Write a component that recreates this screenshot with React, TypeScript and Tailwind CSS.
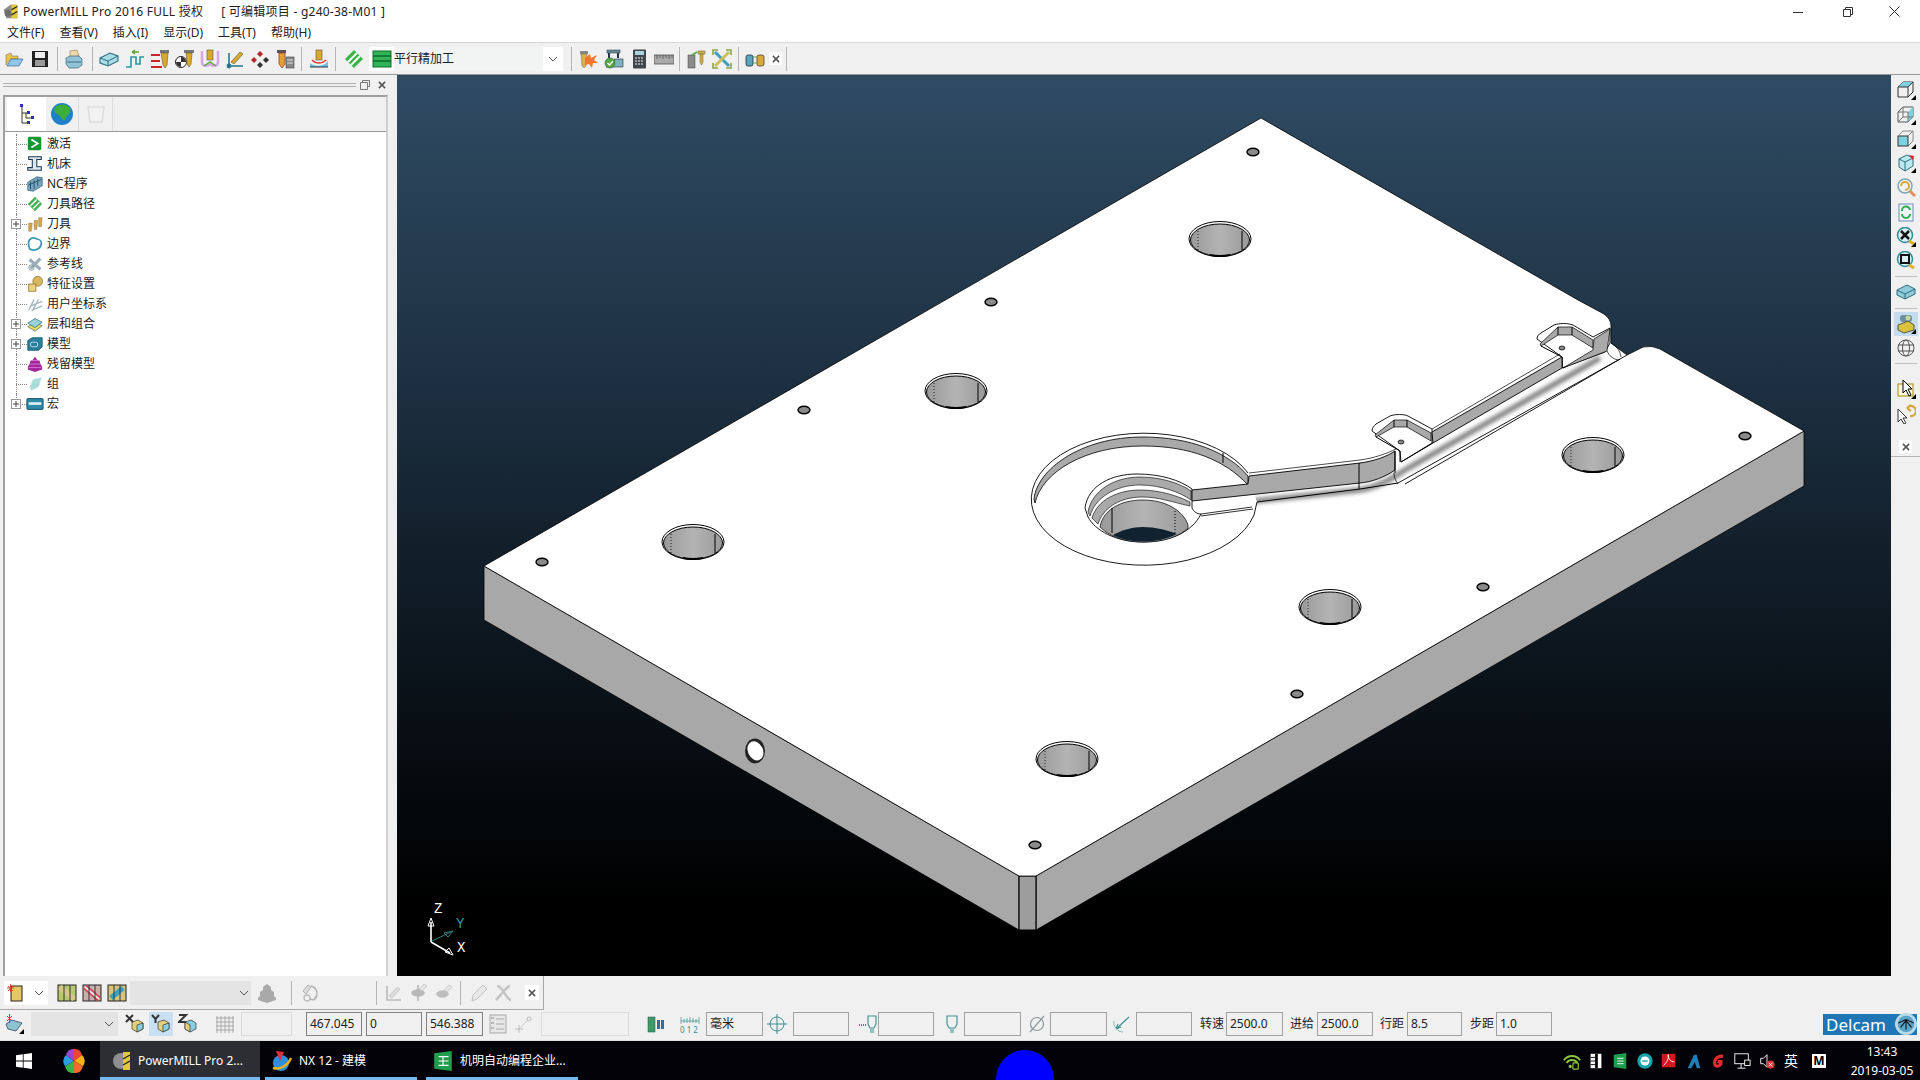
import type { ReactNode } from "react"

type IcProps = { children: ReactNode; className?: string; size?: number }

function Ic({ children, className = "", size = 20 }: IcProps) {
  return (
    <svg viewBox="0 0 20 20" width={size} height={size} className={`shrink-0 ${className}`}>
      {children}
    </svg>
  )
}

const corner = <path d="M20 20V15L15 20Z" fill="#000" />

// main toolbar
const icons: Record<string, ReactNode> = {
  open: <><path d="M2 16L2 6L7 4L8 7L14 7L14 10L6 10Z" fill="#e9c24a" stroke="#876" strokeWidth=".6" /><path d="M3 17L7 10L19 10L15 17Z" fill="#8fc6ea" stroke="#357" strokeWidth=".6" /></>,
  save: <><rect x="2" y="2" width="16" height="16" fill="#222" /><rect x="5" y="3" width="10" height="6" fill="#eee" /><rect x="5" y="11" width="10" height="6" fill="#999" /></>,
  print: <><path d="M6 2L13 1L15 7L6 8Z" fill="#eed9a8" stroke="#875" strokeWidth=".6" /><path d="M2 9L6 7L15 7L18 10L18 16L14 19L5 19L2 15Z" fill="#8fc3d5" stroke="#467" strokeWidth=".7" /><path d="M3 13L17 13" stroke="#356" strokeWidth=".8" /></>,
  block: <><path d="M1 9L11 4L19 7L19 12L9 17L1 14Z" fill="#a9dbe6" stroke="#2d6d80" strokeWidth="1.1" /><path d="M1 9L9 12L19 7M9 12L9 17" stroke="#2d6d80" fill="none" strokeWidth="1" /></>,
  path: <><path d="M1 18L6 18L6 8L11 8L11 15L15 15L15 8L19 8" fill="none" stroke="#2b97a3" strokeWidth="1.6" /><path d="M14 3L7 3M7 3L10 1M7 3L10 5" stroke="#5aa833" strokeWidth="1.3" fill="none" /></>,
  tool: <><path d="M1 6L10 6M1 12L10 12M1 18L12 18" stroke="#c6262a" strokeWidth="2" /><rect x="10" y="1" width="9" height="3" fill="#777" /><path d="M11 4L18 4L17 16L15 19L13 16Z" fill="#d9a92c" stroke="#654" strokeWidth=".6" /></>,
  toolball: <><circle cx="6" cy="13" r="5.5" fill="#fff" stroke="#222" /><path d="M6 8A5 5 0 0 1 11 13L6 13L1 13A5 5 0 0 0 6 18Z" fill="#333" /><rect x="9" y="1" width="10" height="3" fill="#777" /><path d="M11 4L17 4L16 15L14 18L12 15Z" fill="#d9a92c" stroke="#654" strokeWidth=".6" /></>,
  pocket: <><path d="M2 2L2 13C2 18 8 17 10 15C12 17 18 18 18 13L18 2" stroke="#d8a6e4" strokeWidth="2.5" fill="none" /><path d="M4 17L10 13L16 17" stroke="#5cae3a" strokeWidth="1.5" fill="none" /><rect x="7" y="1" width="6" height="10" fill="#d9a92c" stroke="#654" strokeWidth=".6" /></>,
  axes: <><path d="M4 4L4 17L18 17" stroke="#26778d" strokeWidth="1.6" fill="none" /><circle cx="4" cy="17" r="2.4" fill="#26778d" /><path d="M6 13L15 3L18 5L9 15Z" fill="#d9a92c" stroke="#554" strokeWidth=".6" /></>,
  points: <><path d="M10 2L13 5L10 8L7 5Z" fill="#b12a28" /><path d="M4 8L7 11L4 14L1 11Z" fill="#b12a28" /><path d="M16 8L19 11L16 14L13 11Z" fill="#333" /><path d="M10 13L13 16L10 19L7 16Z" fill="#333" /></>,
  holder: <><rect x="2" y="1" width="9" height="3" fill="#555" /><path d="M4 4L10 4L10 15L7 19L4 15Z" fill="#e2a132" stroke="#a33" strokeWidth=".8" /><rect x="11" y="8" width="8" height="11" fill="#888" stroke="#444" strokeWidth=".6" /><path d="M12 11L18 11M12 14L18 14" stroke="#ddd" /></>,
  mill: <><path d="M1 18L1 14C6 18 14 18 19 12L19 18Z" fill="#72c2df" /><path d="M3 11C7 15 13 15 17 11" stroke="#d93a30" strokeWidth="1.4" fill="none" /><rect x="7" y="1" width="6" height="10" fill="#d9a92c" stroke="#654" strokeWidth=".6" /><path d="M1 18L19 18" stroke="#234" strokeWidth="1" /></>,
  stripes: <><path d="M10 1L19 10L10 19L1 10Z" fill="#3bb448" /><path d="M4 13L13 4M7 16L16 7" stroke="#fff" strokeWidth="1.8" /></>,
  list: <><rect x="1" y="2" width="18" height="16" fill="#31b457" stroke="#0e6a2b" /><path d="M1 7L19 7M1 12L19 12" stroke="#0e6a2b" strokeWidth="1.4" /></>,
  burst: <><rect x="1" y="2" width="8" height="3" fill="#888" /><path d="M2 5L8 5L7 17L5 19L3 17Z" fill="#d8b04c" stroke="#765" strokeWidth=".5" /><path d="M6 9L11 5L12 9L18 6L15 11L19 14L14 14L13 19L10 15L6 16Z" fill="#f2762b" /></>,
  check: <><rect x="3" y="1" width="13" height="3" fill="#678b96" stroke="#234" strokeWidth=".5" /><path d="M5 4L5 9M14 4L14 9" stroke="#234" strokeWidth="2" /><path d="M10 10L19 10L19 18L2 18L10 14Z" fill="#7fb3bf" stroke="#234" strokeWidth=".6" /><circle cx="6" cy="14" r="5" fill="#55a83a" stroke="#265" strokeWidth=".6" /><path d="M3.5 14L5.5 16L9 12" stroke="#fff" fill="none" strokeWidth="1.3" /></>,
  calc: <><rect x="4" y="0.5" width="13" height="19" rx="1" fill="#3f454a" /><rect x="6" y="2" width="9" height="4" fill="#a8d2dd" /><path d="M6 9H15M6 12H15M6 15H15" stroke="#bbb" strokeWidth="1.6" strokeDasharray="2 1" /></>,
  ruler: <><rect x="0" y="6" width="20" height="9" fill="#aaa" stroke="#555" strokeWidth=".8" /><path d="M3 6V10M6 6V9M9 6V10M12 6V9M15 6V10M18 6V9" stroke="#444" strokeWidth=".7" /></>,
  tools2: <><rect x="2" y="6" width="7" height="13" fill="#8a8a8a" stroke="#444" strokeWidth=".5" /><rect x="12" y="2" width="7" height="3" fill="#d6b13e" stroke="#654" strokeWidth=".5" /><path d="M14 5H17V13L15.5 16L14 13Z" fill="#d6b13e" stroke="#654" strokeWidth=".5" /><path d="M6 6L11 3" stroke="#4eaa3a" strokeWidth="1.5" /></>,
  cross: <><path d="M3 3L17 17" stroke="#3c9fc0" strokeWidth="3" /><path d="M17 3L3 17" stroke="#c9c05a" strokeWidth="3" /><path d="M1 6V1H6M14 1H19V6M1 14V19H6M19 14V19H14" stroke="#8aa348" strokeWidth="1.6" fill="none" /></>,
  blocks: <><rect x="1" y="6" width="7" height="11" rx="2" fill="#5aa5b9" stroke="#234" strokeWidth=".8" /><rect x="12" y="6" width="7" height="11" rx="2" fill="#d8a83c" stroke="#543" strokeWidth=".8" /><path d="M8 8H12M8 14H12" stroke="#5bb048" strokeWidth="1.2" /></>,
  // tree
  act: <><rect x="2" y="2" width="15" height="15" rx="2" fill="#149634" /><path d="M6 5L13 9.5L6 14" fill="none" stroke="#fff" strokeWidth="2" /></>,
  machine: <><path d="M3 2H17V5H12V13H17V17H2V14H7V5H3Z" fill="#dfe8ee" stroke="#1b3b55" strokeWidth="1.2" /></>,
  nc: <><path d="M2 8L12 2L18 3L18 12L8 18L2 17Z" fill="#7aa4bd" stroke="#2f5d7a" strokeWidth=".8" /><path d="M5 8V16M9 6V15M13 4V12M3 11L17 5" stroke="#234f6a" strokeWidth="1" /></>,
  toolpath: <><path d="M10 2L18 10L10 18L2 10Z" fill="#49b057" /><path d="M5 12L12 5M8 15L15 8" stroke="#fff" strokeWidth="1.5" /></>,
  tools: <><path d="M3 9H7L6 18H3Z" fill="#d8a83c" stroke="#876" strokeWidth=".5" /><path d="M9 6H13L12 16H9Z" fill="#d8a83c" stroke="#876" strokeWidth=".5" /><path d="M14 3H18L17 13H14Z" fill="#d8a83c" stroke="#876" strokeWidth=".5" /></>,
  boundary: <path d="M3 10C2 4 8 2 11 4C14 5 18 5 17 10C16 16 9 18 5 16C3 15 3 12 3 10Z" fill="#fff" stroke="#3e9bb5" strokeWidth="2" />,
  pattern: <><path d="M4 5L16 16M16 4L5 15" stroke="#9aaeb8" strokeWidth="3.5" /><circle cx="6" cy="14" r="3" fill="none" stroke="#7b919b" /></>,
  feature: <><circle cx="13" cy="7" r="5.5" fill="#d8b75c" stroke="#86682a" strokeWidth=".7" /><rect x="3" y="10" width="8" height="8" fill="#ecd27c" stroke="#86682a" strokeWidth=".8" /></>,
  ucs: <><path d="M3 17L9 5M7 18L14 5M4 13L18 7M6 17L18 12" stroke="#a8b8c2" strokeWidth="1.6" /></>,
  layer: <><path d="M2 13L10 8L18 12L10 18Z" fill="#e6da5c" stroke="#4a6d7e" strokeWidth=".8" /><path d="M2 9L10 4L18 8L10 14Z" fill="#9ad0d8" stroke="#2e6d80" strokeWidth=".8" /></>,
  model: <><path d="M2 6L7 3H18V13L14 17H2Z" fill="#2a7f9b" stroke="#0c4558" strokeWidth=".8" /><rect x="5" y="8" width="8" height="5" rx="2" fill="none" stroke="#cde" strokeWidth="1" /></>,
  stock: <><path d="M10 2L13 6L15 6L16 10L18 13L18 16L10 19L2 16L2 13L4 10L5 6L7 6Z" fill="#a0269a" /><path d="M4 10H16M3 14H17M6 6H14" stroke="#e07ad8" strokeWidth="1" /></>,
  group: <path d="M4 14L8 5L17 3L14 13L6 17Z" fill="#a9dbd8" stroke="#c8e6e6" strokeWidth="1" />,
  macro: <><rect x="1" y="4" width="18" height="12" rx="1" fill="#2c8aa8" stroke="#0d4a5e" /><rect x="3" y="8" width="14" height="3" fill="#d8eef2" /></>,
  // right strip
  cubeTop: <><path d="M2 7L7 2H17V12L12 17H2Z" fill="none" stroke="#333" /><path d="M2 7L7 2H17L12 7Z" fill="#7fd0e0" /><path d="M2 7H12V17M12 7L17 2" fill="none" stroke="#333" />{corner}</>,
  cubeRight: <><path d="M2 7L7 2H17V12L12 17H2Z" fill="none" stroke="#555" /><path d="M12 7L17 2V12L12 17Z" fill="#7fd0e0" /><path d="M2 7H12V17M7 2V12H17M7 12L2 17" fill="none" stroke="#777" />{corner}</>,
  cubeFront: <><path d="M7 2H17V12L12 17" fill="none" stroke="#888" /><rect x="2" y="7" width="10" height="10" fill="#7fd0e0" stroke="#333" /><path d="M2 7L7 2M12 7L17 2" stroke="#888" />{corner}</>,
  cubeIso: <><path d="M3 6L11 2L17 5V13L9 18L3 14Z" fill="#bde8ef" stroke="#2d6d80" /><path d="M3 6L9 9L17 5M9 9V18" stroke="#2d6d80" fill="none" /><path d="M13 2L18 3L17 7Z" fill="#e02020" />{corner}</>,
  zoomUndo: <><circle cx="9" cy="8" r="7" fill="#f3f3f3" stroke="#7aa7b0" strokeWidth="1.5" /><path d="M5 8A4 4 0 1 1 9 12" stroke="#d8a83c" strokeWidth="2" fill="none" /><path d="M14 13L19 18" stroke="#e0905a" strokeWidth="3" /></>,
  refresh: <><rect x="3" y="2" width="14" height="17" fill="#eef4fa" stroke="#6a8db8" /><path d="M6 9A4 4 0 0 1 14 8M14 12A4 4 0 0 1 6 12" stroke="#2bae4a" strokeWidth="2" fill="none" /></>,
  zoomFit: <><circle cx="9" cy="8" r="7.5" fill="#dbeef1" stroke="#2f8b9a" strokeWidth="1.5" /><path d="M5 4L13 12M13 4L5 12" stroke="#111" strokeWidth="2.5" /><path d="M13 14L18 17" stroke="#e0b030" strokeWidth="3" />{corner}</>,
  zoomBox: <><circle cx="9" cy="8" r="7.5" fill="#dbeef1" stroke="#2f8b9a" strokeWidth="1.5" /><rect x="5" y="4" width="8" height="8" fill="none" stroke="#111" strokeWidth="2" /><path d="M13 14L18 17" stroke="#e0b030" strokeWidth="3" /></>,
  shade: <><path d="M1 8L11 3L19 7V12L9 17L1 13Z" fill="#8fcbd8" stroke="#2d6d80" /><path d="M1 8L9 12L19 7M9 12V17" fill="none" stroke="#2d6d80" /></>,
  shadeOn: <><rect x="4" y="1" width="12" height="7" rx="3" fill="#6f8f9c" /><path d="M2 11L12 7L18 11V16L8 19L2 16Z" fill="#d9c23c" stroke="#554" /><circle cx="12" cy="4" r="2.5" fill="#c4d8a0" />{corner}</>,
  wire: <><circle cx="10" cy="10" r="8" fill="none" stroke="#555" /><ellipse cx="10" cy="10" rx="3.5" ry="8" fill="none" stroke="#555" /><path d="M2 7H18M2 13H18" stroke="#555" /></>,
  selBox: <><rect x="2" y="5" width="15" height="12" fill="#fdf8de" stroke="#b9a235" strokeWidth="1.3" /><path d="M7 1V14L10 11L13 17L15 16L12 10L16 10Z" fill="#fff" stroke="#000" />{corner}</>,
  selUndo: <><path d="M2 5V18L5 15L8 20L10 19L7 14L11 14Z" fill="#fff" stroke="#333" /><path d="M11 4A5 5 0 1 1 14 12M11 4L15 1M11 4L15 7" stroke="#d8a83c" strokeWidth="2.2" fill="none" /></>,
  // bottom
  layerBar: <><rect x="4" y="3" width="11" height="15" fill="#e5c763" stroke="#222" /><path d="M1 3L6 8M6 3L1 8M3.5 1V9M0 5H7" stroke="#d33" strokeWidth=".9" /></>,
  toolA: <><rect x="1" y="2" width="18" height="16" fill="#b9c96a" stroke="#222" /><path d="M3 4L17 16" stroke="#d8c888" strokeWidth="5" /><path d="M7 2V18M13 2V18" stroke="#334" /></>,
  toolB: <><rect x="1" y="2" width="18" height="16" fill="#c9b0a6" stroke="#222" /><path d="M3 4L17 16" stroke="#d8384a" strokeWidth="5" /><path d="M3 4L17 16" stroke="#eee" strokeWidth="2" /><path d="M7 2V18M13 2V18" stroke="#334" /></>,
  toolC: <><rect x="1" y="2" width="18" height="16" fill="#d5c47a" stroke="#222" /><path d="M4 15L16 5" stroke="#3aa0c0" strokeWidth="5" /><path d="M7 2V18M13 2V18" stroke="#334" /></>,
  stackOff: <path d="M10 1L14 4V7L17 9V13L19 15V17L10 20L1 17V15L3 13V9L6 7V4Z" fill="#a9a9a9" />,
  rotOff: <><path d="M3 8L8 2L11 4L6 11Z" fill="#ddd" stroke="#b0b0b0" /><path d="M11 3A8 8 0 0 1 14 17M14 17L10 16M14 17L16 13" fill="none" stroke="#b0b0b0" strokeWidth="1.3" /><circle cx="7" cy="15" r="3" fill="none" stroke="#bbb" strokeWidth="1.3" /></>,
  axOff: <><path d="M4 3V17H18" stroke="#bbb" strokeWidth="1.6" fill="none" /><path d="M6 13L14 4L17 6L9 15Z" fill="#ddd" stroke="#bbb" strokeWidth=".7" /></>,
  bellOff: <><path d="M10 2V18" stroke="#aaa" strokeWidth="1.3" /><path d="M3 10C5 5 15 5 17 10C15 15 5 15 3 10Z" fill="#b8b8b8" /><path d="M11 6L16 1L19 3L14 8Z" fill="#e5e5e5" stroke="#bbb" strokeWidth=".6" /></>,
  bell2Off: <><path d="M3 11C5 6 14 6 16 11C14 16 5 16 3 11Z" fill="#bdbdbd" /><path d="M11 7L16 2L19 4L14 9Z" fill="#e5e5e5" stroke="#bbb" strokeWidth=".6" /></>,
  penOff: <><path d="M3 18L4 12L14 2L18 6L8 16Z" fill="#e8e8e8" stroke="#c4c4c4" /></>,
  xOff: <><path d="M4 3C8 3 10 8 12 11C14 14 16 17 18 17M17 3C13 4 8 12 3 17" stroke="#c4c4c4" strokeWidth="2.6" fill="none" /></>,
  plane: <><path d="M2 10L8 6L18 9L12 17L4 15Z" fill="#8bc3d0" stroke="#346" strokeWidth=".8" /><path d="M3 2L8 7M8 2L3 7M5.5 0V9" stroke="#d33" strokeWidth="1" />{corner}</>,
  axX: <><path d="M7 8L13 6L18 9V15L12 18L7 15Z" fill="#e6cf7a" stroke="#333" strokeWidth=".7" /><path d="M12 11L18 9V15L12 18Z" fill="#86cfe0" stroke="#333" strokeWidth=".7" /><path d="M1 1L8 8M8 1L1 8" stroke="#333" strokeWidth="2" /></>,
  axY: <><path d="M7 8L13 6L18 9V15L12 18L7 15Z" fill="#e6cf7a" stroke="#333" strokeWidth=".7" /><path d="M12 11L18 9V15L12 18Z" fill="#86cfe0" stroke="#333" strokeWidth=".7" /><path d="M1 1L4.5 5L8 1M4.5 5V9" stroke="#333" strokeWidth="2" fill="none" /></>,
  axZ: <><path d="M7 8L13 6L18 9V15L12 18L7 15Z" fill="#86cfe0" stroke="#333" strokeWidth=".7" /><path d="M7 8L12 11V18L7 15Z" fill="#e6cf7a" stroke="#333" strokeWidth=".7" /><path d="M1 1H8L1 8H8" stroke="#333" strokeWidth="2" fill="none" /></>,
  grid: <path d="M2 2V19M6 2V19M10 2V19M14 2V19M18 2V19M1 4H19M1 8H19M1 12H19M1 16H19" stroke="#9a9a9a" strokeWidth=".8" />,
  xyz: <><rect x="2" y="1" width="16" height="18" fill="#e6e6e6" stroke="#aaa" /><path d="M8 5H16M8 10H16M8 15H16" stroke="#aaa" /><path d="M3 4H6M3 9H6M3 14H6" stroke="#888" /></>,
  move: <><path d="M5 15L14 6" stroke="#bbb" strokeDasharray="2 1" /><circle cx="15" cy="5" r="2" fill="none" stroke="#bbb" /><path d="M5 11V19M1 15H9" stroke="#bbb" /></>,
  status: <><rect x="2" y="3" width="7" height="15" fill="#3f9a68" stroke="#255" strokeWidth=".5" /><rect x="11" y="6" width="3" height="9" fill="#2d6fa8" /><rect x="15" y="6" width="3" height="9" fill="#2d6fa8" /></>,
  scale: <><path d="M1 3V10M19 3V10M1 7H19M4 5V9M7 4V9M10 3V9M13 4V9M16 5V9" stroke="#3b8f8f" strokeWidth=".7" /><text x="0" y="19" fontSize="8" fill="#3b8f8f">0 1 2</text></>,
  crosshair: <><circle cx="10" cy="10" r="7" fill="none" stroke="#3b8f8f" /><path d="M10 0V20M0 10H20" stroke="#3b8f8f" /></>,
  toolLen: <><path d="M10 2H18V10L16 14H12L10 10Z" fill="none" stroke="#3b8f8f" strokeWidth="1.1" /><path d="M12 16H16M12 18H16" stroke="#3b8f8f" /><path d="M1 11H9" stroke="#3b8f8f" strokeDasharray="1 1" strokeWidth="2" /></>,
  toolTip: <><path d="M5 2H15V10L13 14H7L5 10Z" fill="none" stroke="#3b8f8f" strokeWidth="1.1" /><path d="M8 16H12M8 18H12" stroke="#3b8f8f" /></>,
  dia: <><circle cx="10" cy="10" r="6.5" fill="none" stroke="#8a9a9a" strokeWidth="1.2" /><path d="M3 18L17 2" stroke="#8a9a9a" strokeWidth="1.2" /></>,
  angle: <><path d="M18 3L5 15M5 15L10 13M5 15L7 10" stroke="#3b8f8f" fill="none" strokeWidth="1.1" /><path d="M3 7C2 12 6 18 12 18" stroke="#8abcbc" fill="none" /></>,
  wifi: <><path d="M1 9C6 3 14 3 19 9M4 12C7 8 13 8 16 12" stroke="#8bc53f" strokeWidth="2.2" fill="none" /><rect x="11" y="12" width="6" height="7" rx="1" fill="none" stroke="#8bc53f" strokeWidth="1.4" /><circle cx="8" cy="16" r="1.8" fill="#8bc53f" /></>,
  film: <><rect x="4" y="2" width="12" height="16" fill="#fff" /><path d="M4 6H9M4 10H9M4 14H9" stroke="#000" /><rect x="9" y="2" width="3" height="16" fill="#000" /></>,
  sheet: <><path d="M3 3L17 1V19L3 17Z" fill="#1e9d4c" /><path d="M7 7H14M7 10H14M7 13H14" stroke="#fff" /></>,
  eset: <><circle cx="10" cy="10" r="8.5" fill="#1aa5ad" /><circle cx="10" cy="10" r="5" fill="#fff" /><path d="M7 10H13" stroke="#1aa5ad" strokeWidth="1.6" /></>,
  pdf: <><rect x="2" y="2" width="15" height="15" fill="#d4171d" /><path d="M4 15C8 11 10 7 9 3C9 8 12 11 16 11" stroke="#fff" fill="none" /></>,
  adsk: <path d="M3 18L10 3H13L17 18H13L11 11L7 18Z" fill="#1f7fb8" />,
  red: <path d="M16 3C8 2 3 8 5 15C7 19 13 18 15 14L15 9L10 9L9 12L11 13C10 15 8 14 8 12C8 8 12 6 15 7Z" fill="#e22c2c" />,
  net: <><rect x="2" y="2" width="15" height="11" fill="none" stroke="#fff" /><path d="M9 13V18M5 18H14" stroke="#fff" /><rect x="13" y="9" width="6" height="6" fill="#000" stroke="#fff" /></>,
  sound: <><path d="M3 7H6L10 3V17L6 13H3Z" fill="none" stroke="#fff" /><circle cx="14" cy="14" r="4.5" fill="#d43a3a" /><path d="M12 12L16 16M16 12L12 16" stroke="#fff" /></>,
}

const Tool = ({ name, w = 25 }: { name: string; w?: number }) => (
  <div className="flex justify-center shrink-0" style={{ width: w }}>
    <Ic>{icons[name]}</Ic>
  </div>
)

const Sep = () => <div className="w-px h-[24px] bg-[#b5b5b5] mx-[3px] shrink-0" />

function Close({ className = "" }: { className?: string }) {
  return (
    <div className={`w-[13px] h-[13px] bg-white flex items-center justify-center shrink-0 ${className}`}>
      <svg viewBox="0 0 9 9" width="8" height="8"><path d="M1 1L8 8M8 1L1 8" stroke="#555" strokeWidth="1.7" /></svg>
    </div>
  )
}

const Chevron = ({ color = "#555" }: { color?: string }) => (
  <svg viewBox="0 0 10 6" width="10" height="6"><path d="M1 1L5 5L9 1" fill="none" stroke={color} strokeWidth="1" /></svg>
)

function TitleBar() {
  return (
    <div className="h-[22px] pt-[1px] flex items-center bg-white text-[12px] text-[#222] shrink-0 tracking-[0.25px]">
      <Ic size={17} className="ml-[2px] mr-[4px]">
        <path d="M2 8L10 2L18 2L18 18L5 18Z" fill="#8e8e8e" /><path d="M11 2H18V18H11Z" fill="#dfc83a" /><path d="M11 8L18 4M11 14L18 10" stroke="#222" strokeWidth="1.4" /><circle cx="7" cy="12" r="4" fill="#6d6d6d" />
      </Ic>
      <span className="whitespace-pre">PowerMILL Pro 2016 FULL 授权</span>
      <span className="ml-[18px] whitespace-pre">[ 可编辑项目 - g240-38-M01 ]</span>
      <div className="ml-auto flex items-center">
        <svg width="10" height="10" className="mr-[40px]"><path d="M0 5.5H10" stroke="#333" /></svg>
        <svg width="10" height="10" className="mr-[36px]"><path d="M2.5 2.5V.5H9.5V7.5H7.5M.5 2.5H7.5V9.5H.5Z" fill="none" stroke="#333" /></svg>
        <svg width="11" height="11" className="mr-[20px]"><path d="M.5 .5L10.5 10.5M10.5 .5L.5 10.5" stroke="#333" /></svg>
      </div>
    </div>
  )
}

const menus = ["文件(F)", "查看(V)", "插入(I)", "显示(D)", "工具(T)", "帮助(H)"]

function MenuBar() {
  return (
    <div className="h-[21px] pt-[1px] flex items-center bg-white text-[12px] text-[#222] pl-[7px] gap-[15px] shrink-0 border-b border-[#d6d6d6]">
      {menus.map(m => (
        <span key={m} className="whitespace-nowrap">{m}</span>
      ))}
    </div>
  )
}

function MainToolbar() {
  return (
    <div className="h-[32px] flex items-center bg-[#f0f0f0] shrink-0 border-b border-[#9a9a9a] pl-[2px]">
      <Tool name="open" w={23} />
      <Tool name="save" w={29} />
      <Sep />
      <Tool name="print" w={26} />
      <div className="w-[2px]" />
      <Sep />
      <Tool name="block" w={26} />
      <Tool name="path" />
      <Tool name="tool" />
      <Tool name="toolball" />
      <Tool name="pocket" />
      <Tool name="axes" />
      <Tool name="points" />
      <Tool name="holder" />
      <div className="w-[1px]" />
      <Sep />
      <Tool name="mill" w={27} />
      <Sep />
      <Tool name="stripes" w={30} />
      <div className="w-[194px] h-[24px] bg-white flex items-center shrink-0">
        <Ic size={20} className="ml-[3px] mr-[2px]">{icons.list}</Ic>
        <span className="flex-1 h-full flex items-center bg-[#f2f4f4] text-[12px] text-[#222]">平行精加工</span>
        <span className="w-[20px] flex justify-center"><Chevron /></span>
      </div>
      <div className="w-[5px]" />
      <Sep />
      <div className="w-[2px]" />
      <Tool name="burst" w={24} />
      <Tool name="check" />
      <Tool name="calc" />
      <Tool name="ruler" />
      <Sep />
      <Tool name="tools2" w={26} />
      <Tool name="cross" w={26} />
      <Sep />
      <Tool name="blocks" w={26} />
      <Close className="ml-[1px]" />
      <div className="w-px h-[24px] bg-[#b5b5b5] ml-[4px]" />
    </div>
  )
}

const tree: { icon: string; label: string; plus?: boolean }[] = [
  { icon: "act", label: "激活" },
  { icon: "machine", label: "机床" },
  { icon: "nc", label: "NC程序" },
  { icon: "toolpath", label: "刀具路径" },
  { icon: "tools", label: "刀具", plus: true },
  { icon: "boundary", label: "边界" },
  { icon: "pattern", label: "参考线" },
  { icon: "feature", label: "特征设置" },
  { icon: "ucs", label: "用户坐标系" },
  { icon: "layer", label: "层和组合", plus: true },
  { icon: "model", label: "模型", plus: true },
  { icon: "stock", label: "残留模型" },
  { icon: "group", label: "组" },
  { icon: "macro", label: "宏", plus: true },
]

function Explorer() {
  return (
    <div className="w-[397px] shrink-0 bg-[#f0f0f0] flex flex-col pl-[3px] pr-[9px]">
      <div className="h-[20px] flex items-center shrink-0">
        <div className="w-[356px] h-[4px] border-y border-[#b0b0b0]" />
        <svg width="10" height="10" className="ml-[4px]"><path d="M2.5 2.5V.5H9.5V6.5H7.5M.5 2.5H7.5V9.5H.5Z" fill="none" stroke="#777" /></svg>
        <Close className="ml-[5px] !bg-transparent" />
      </div>
      <div className="flex-1 flex flex-col border-2 border-b-0 border-[#a0a0a0] border-r-[#cfcfcf] bg-white">
        <div className="h-[35px] flex items-end bg-[#f0f0f0] border-b border-[#9a9a9a] pl-[2px] shrink-0">
          <div className="w-[39px] h-full bg-white flex items-center justify-center">
            <svg viewBox="0 0 20 22" width="20" height="22">
              <path d="M5 2V20H12M5 10H12M9 10V15H16" fill="none" stroke="#333" />
              <path d="M3 1H6V4H3ZM10 8H13V11H10ZM14 13H17V16H14ZM10 18H13V21H10Z" fill="#3030b0" />
            </svg>
          </div>
          <div className="w-[33px] h-full flex items-center justify-center border-r border-[#dcdcdc]">
            <svg viewBox="0 0 24 24" width="24" height="24">
              <circle cx="12" cy="12" r="11" fill="#1f80c8" />
              <path d="M5 5C9 2 16 1 20 6C22 12 16 13 15 18C12 20 11 13 7 12C4 11 4 8 5 5Z" fill="#3cae3c" />
            </svg>
          </div>
          <div className="w-[34px] h-full flex items-center justify-center border-r border-[#dcdcdc]">
            <svg viewBox="0 0 20 20" width="20" height="20">
              <path d="M2 3H18L16 18H4Z" fill="#f2f2f2" stroke="#dedede" strokeWidth="1.5" />
            </svg>
          </div>
        </div>
        <div className="pt-[2px] text-[12px] text-[#222]">
          {tree.map((t, i) => (
            <div key={t.label} className="relative h-[20px] flex items-center pl-[11px]">
              <div className={`absolute left-[11px] border-l border-dotted border-[#888] ${i === tree.length - 1 ? "top-0 h-[10px]" : "top-0 h-[20px]"}`} />
              <div className="absolute left-[11px] top-[10px] w-[11px] border-t border-dotted border-[#888]" />
              {t.plus && (
                <div className="absolute left-[6px] top-[5px] w-[10px] h-[10px] bg-white border border-[#999] flex items-center justify-center">
                  <svg width="6" height="6"><path d="M0 3H6M3 0V6" stroke="#444" /></svg>
                </div>
              )}
              <Ic size={18} className="ml-[10px] mr-[3px] relative">{icons[t.icon]}</Ic>
              <span className="whitespace-nowrap">{t.label}</span>
            </div>
          ))}
        </div>
      </div>
    </div>
  )
}

const bigHoles = [[1220, 239], [956, 391], [693, 542], [1593, 455], [1330, 607], [1067, 759]]
const smallHoles = [[1253, 152], [991, 302], [804, 410], [542, 562], [1483, 587], [1297, 694], [1035, 845], [1745, 436], [1078, 470], [1210, 470], [1078, 546], [1210, 546]]
const tinyHoles = [[1401, 442], [1562, 348]]

function Part() {
  return (
    <svg viewBox="397 75 1494 901" width="1494" height="901" className="block">
      <defs>
        <linearGradient id="bore" x1="0" x2="1" y1="0" y2="0">
          <stop offset="0" stopColor="#999999" />
          <stop offset=".5" stopColor="#b4b4b4" />
          <stop offset="1" stopColor="#999999" />
        </linearGradient>
        <filter id="soft"><feGaussianBlur stdDeviation="2" /></filter>
      </defs>

      {/* side faces */}
      <path d="M484 566L1019 876V930L484 620Z" fill="#a8a8a8" stroke="#000" strokeWidth=".8" />
      <path d="M1036 876L1804 431V486L1036 930Z" fill="#a8a8a8" stroke="#000" strokeWidth=".8" />
      <path d="M1019 876H1036V930H1019Z" fill="#9d9d9d" stroke="#000" strokeWidth="1.2" />
      <ellipse cx="755" cy="751" rx="10" ry="12.5" fill="#222" />
      <ellipse cx="755.5" cy="751" rx="7.5" ry="10" fill="#fff" transform="rotate(-25 755 751)" />

      {/* top face */}
      <path d="M1261 118L1578 300L1604 314Q1611 319 1611 326V343L1627 355L1643 347Q1652 345 1660 349L1804 431L1036 876H1019L484 566Z" fill="#fff" stroke="#000" strokeWidth=".8" />

      {bigHoles.map(([x, y]) => (
        <g key={`${x}-${y}`}>
          <ellipse cx={x} cy={y} rx="31" ry="17.5" fill="#fff" stroke="#000" />
          <ellipse cx={x} cy={y + 1} rx="29.5" ry="16" fill="url(#bore)" stroke="#000" />
          <path d={`M${x + 22} ${y - 8}V${y + 11}`} stroke="#000" />
          <path d={`M${x - 22} ${y - 8}V${y + 11}`} stroke="#222" strokeDasharray="1 2" />
          <path d={`M${x - 10} ${y + 16}Q${x} ${y + 18} ${x + 10} ${y + 16}`} stroke="#000" strokeWidth="2" fill="none" />
        </g>
      ))}
      {smallHoles.map(([x, y]) => (
        <ellipse key={`${x}-${y}`} cx={x} cy={y} rx="6" ry="3.8" fill="#8a8a8a" stroke="#000" strokeWidth="1.4" />
      ))}

      {/* shadow under channel wall */}
      <path d="M1205 506L1360 490C1385 486 1400 472 1412 466L1600 358" fill="none" stroke="#777" strokeWidth="5" filter="url(#soft)" />

      {/* circular recess */}
      <path d="M1248 473A113 66 0 1 0 1254 515L1257 502" fill="#fff" stroke="#000" strokeWidth=".9" />
      <path d="M1034 499C1037 470 1080 437 1143 437C1190 437 1228 452 1248 476V485C1225 460 1190 446 1143 446C1085 446 1042 472 1035 503Z" fill="#a9a9a9" stroke="#000" strokeWidth=".8" />
      <path d="M1223 453V463" stroke="#000" />
      <path d="M1085 508C1088 485 1112 474 1137 474C1160 474 1180 480 1192 489V508C1194 512 1197 514 1201 514C1192 532 1170 542 1143 542C1115 542 1095 530 1088 517Z" fill="#fff" stroke="#000" strokeWidth=".9" />
      <path d="M1088 512C1092 490 1115 477 1140 477C1160 477 1180 483 1191 491V500C1180 492 1160 485 1140 485C1115 485 1095 498 1090 516Z" fill="#a9a9a9" stroke="#000" strokeWidth=".6" />
      <path d="M1092 518C1097 500 1118 490 1140 490C1160 490 1178 496 1190 502V506C1175 503 1160 497 1142 497C1120 497 1103 508 1098 524Z" fill="#a9a9a9" stroke="#000" strokeWidth=".6" />
      <path d="M1100 527C1103 510 1120 500 1143 500C1165 500 1183 510 1188 525V528C1180 536 1165 542 1143 542C1122 542 1108 535 1100 527Z" fill="url(#bore)" stroke="#000" strokeWidth=".7" />
      <path d="M1113 535C1122 530 1132 527 1143 527C1155 527 1167 530 1177 534C1168 539 1155 541.5 1143 541.5C1130 541.5 1120 539 1113 535Z" fill="#10222f" />
      <path d="M1112 508V533" stroke="#000" />
      <path d="M1175 511V533" stroke="#000" strokeDasharray="1 2" />
      <path d="M1201 516L1253 509M1201 514L1252 507" stroke="#000" strokeWidth=".8" fill="none" />

      {/* channel walls */}
      <path d="M1192 490L1248 484L1249 476L1360 463C1375 461 1388 456 1395 451L1395 470C1385 477 1372 482 1360 483L1192 501Z" fill="#a9a9a9" stroke="#000" strokeWidth=".9" />
      <path d="M1249 473L1360 460C1375 458 1388 453 1396 449" fill="none" stroke="#000" strokeWidth=".7" />
      <path d="M1359 463V489" stroke="#000" />
      <path d="M1395 451V473" stroke="#000" />
      <path d="M1257 502L1320 494L1360 489L1398 483" fill="none" stroke="#000" />
      <path d="M1394 473C1394 478 1396 481 1398 484" fill="none" stroke="#000" strokeWidth=".7" />
      <path d="M1398 483L1620 359M1405 484L1627 355" fill="none" stroke="#000" strokeWidth=".9" />

      {/* left pocket */}
      <path d="M1372 431C1372 428 1374 426 1376 424L1390 416C1395 414 1404 414 1408 416L1432 429V443L1401 462L1400 451Z" fill="#fff" stroke="#000" strokeWidth=".9" />
      <path d="M1375 435L1394 420H1407L1431 433V441L1407 427H1394L1376 437Z" fill="#a9a9a9" stroke="#000" strokeWidth=".7" />
      <path d="M1376 437L1400 451V462" fill="none" stroke="#000" />
      <path d="M1394 420V427M1407 420V427" stroke="#000" />

      {/* right pocket */}
      <path d="M1537 339C1537 336 1539 334 1541 333L1554 325C1559 323 1568 323 1573 325L1593 337L1610 328V343L1605 352L1562 368L1562 357Z" fill="#fff" stroke="#000" strokeWidth=".9" />
      <path d="M1540 344L1558 327H1572L1593 340V348L1572 335H1558L1541 346Z" fill="#a9a9a9" stroke="#000" strokeWidth=".7" />
      <path d="M1594 339L1610 329L1607 351L1563 368L1593 350Z" fill="#a9a9a9" stroke="#000" strokeWidth=".7" />
      <path d="M1541 346L1562 357V368" fill="none" stroke="#000" />
      <path d="M1558 327V335M1572 327V335" stroke="#000" />
      <path d="M1607 351C1609 356 1613 359 1618 360M1611 343C1616 346 1620 350 1621 357" fill="none" stroke="#000" strokeWidth=".7" />

      {/* straight wall between pockets */}
      <path d="M1432 432L1562 357V368L1433 443Z" fill="#a9a9a9" stroke="#000" strokeWidth=".9" />
      <path d="M1432 429L1560 354" fill="none" stroke="#000" strokeWidth=".7" />
      <path d="M1401 462L1433 443" fill="none" stroke="#000" />

      {tinyHoles.map(([x, y]) => (
        <ellipse key={`t${x}`} cx={x} cy={y} rx="3" ry="2" fill="#888" stroke="#000" strokeWidth=".7" />
      ))}

      {/* axis triad */}
      <g fill="none">
        <path d="M431 942V922M431 942L450 953" stroke="#fff" strokeWidth="1.6" />
        <path d="M431 918L428 926L434 926Z" stroke="#fff" />
        <path d="M453 955L445 952L449 948Z" stroke="#fff" />
        <path d="M432 941L451 932" stroke="#2f8078" />
        <path d="M453 931L444 933L448 937Z" stroke="#2f8078" />
      </g>
      <text x="434" y="913" fill="#fff" fontSize="14" fontFamily="'Liberation Mono', monospace">Z</text>
      <text x="456" y="928" fill="#2f9a92" fontSize="14" fontFamily="'Liberation Mono', monospace">Y</text>
      <text x="457" y="952" fill="#fff" fontSize="14" fontFamily="'Liberation Mono', monospace">X</text>
    </svg>
  )
}

const rightTools: (string | number)[] = [
  "cubeTop", "cubeRight", "cubeFront", "cubeIso", "zoomUndo", "refresh", "zoomFit", "zoomBox",
  -1, "shade", -1, "shadeOn", "wire", -1, "selBox", "selUndo",
]

function RightStrip() {
  return (
    <div className="w-[29px] shrink-0 bg-[#f0f0f0] flex flex-col items-center pt-[3px]">
      {rightTools.map((t, i) =>
        t === -1 ? (
          <div key={i} className="w-[22px] h-px bg-[#bdbdbd] my-[3px] shrink-0" />
        ) : (
          <div key={i} className={`w-[24px] h-[24.4px] flex items-center justify-center shrink-0 ${t === "shadeOn" ? "bg-[#c4dcf0]" : ""} ${t === "selBox" ? "mt-[10px]" : ""}`}>
            <Ic size={20}>{icons[t as string]}</Ic>
          </div>
        ),
      )}
      <Close className="mt-[14px]" />
      <div className="w-full h-px bg-[#b5b5b5] mt-[3px]" />
    </div>
  )
}

function Field({ value = "", w, className = "", on = false }: { value?: string; w: number; className?: string; on?: boolean }) {
  return (
    <div
      className={`h-[24px] shrink-0 border border-[#a0a0a0] flex items-center pl-[3px] text-[12px] text-[#222] ${on ? "bg-white" : "bg-[#f0f0f0]"} ${className}`}
      style={{ width: w }}
    >
      {value}
    </div>
  )
}

function BottomBars() {
  return (
    <div className="shrink-0 bg-[#f0f0f0] h-[64px] flex flex-col text-[12px] text-[#222]">
      <div className="h-[34px] w-[544px] flex items-center border-r border-b border-[#a8a8a8] shrink-0">
        <div className="ml-[4px] w-[44px] h-[24px] bg-white flex items-center shrink-0 pl-[3px]">
          <Ic>{icons.layerBar}</Ic>
          <span className="ml-[7px]"><Chevron /></span>
        </div>
        <Ic className="ml-[9px]">{icons.toolA}</Ic>
        <Ic className="ml-[5px]">{icons.toolB}</Ic>
        <Ic className="ml-[5px]">{icons.toolC}</Ic>
        <div className="ml-[3px] w-[121px] h-[24px] bg-[#e4e4e4] flex items-center justify-end pr-[2px] shrink-0"><Chevron /></div>
        <Ic className="ml-[6px]">{icons.stackOff}</Ic>
        <div className="ml-[14px] w-px h-[24px] bg-[#b5b5b5]" />
        <Ic className="ml-[8px]">{icons.rotOff}</Ic>
        <div className="ml-[56px] w-px h-[24px] bg-[#b5b5b5]" />
        <Ic className="ml-[6px]">{icons.axOff}</Ic>
        <Ic className="ml-[5px]">{icons.bellOff}</Ic>
        <Ic className="ml-[5px]">{icons.bell2Off}</Ic>
        <div className="ml-[7px] w-px h-[24px] bg-[#b5b5b5]" />
        <Ic className="ml-[8px]">{icons.penOff}</Ic>
        <Ic className="ml-[4px]">{icons.xOff}</Ic>
        <Close className="ml-[12px] !w-[14px] !h-[15px]" />
      </div>
      <div className="flex-1 flex items-center pl-[4px] pb-[2px]">
        <Ic>{icons.plane}</Ic>
        <div className="ml-[7px] w-[87px] h-[24px] bg-[#e4e4e4] flex items-center justify-end pr-[4px] shrink-0"><Chevron /></div>
        <Ic className="ml-[7px]">{icons.axX}</Ic>
        <div className="ml-[4px] p-[2px] bg-[#c9e0f2] shrink-0"><Ic size={20}>{icons.axY}</Ic></div>
        <Ic className="ml-[5px]">{icons.axZ}</Ic>
        <Ic className="ml-[17px]">{icons.grid}</Ic>
        <Field w={51} className="ml-[6px] !border-[#dcdcdc]" />
        <Field w={56} className="ml-[14px] !border-[#808080]" value="467.045" />
        <Field w={56} className="ml-[4px] !border-[#808080]" value="0" />
        <Field w={57} className="ml-[4px] !border-[#808080]" value="546.388" />
        <Ic className="ml-[5px]">{icons.xyz}</Ic>
        <Ic className="ml-[6px]">{icons.move}</Ic>
        <Field w={88} className="ml-[7px] !border-[#dcdcdc]" />
        <Ic className="ml-[17px]">{icons.status}</Ic>
        <Ic className="ml-[14px]">{icons.scale}</Ic>
        <Field w={57} className="ml-[6px]" value="毫米" />
        <Ic className="ml-[4px]">{icons.crosshair}</Ic>
        <Field w={56} className="ml-[6px]" />
        <Ic className="ml-[9px]">{icons.toolLen}</Ic>
        <Field w={56} />
        <Ic className="ml-[8px]">{icons.toolTip}</Ic>
        <Field w={57} className="ml-[2px]" />
        <Ic className="ml-[6px]">{icons.dia}</Ic>
        <Field w={57} className="ml-[3px]" />
        <Ic className="ml-[4px]">{icons.angle}</Ic>
        <Field w={56} className="ml-[5px]" />
        <span className="ml-[8px] w-[24px] whitespace-nowrap">转速</span>
        <Field w={57} className="ml-[2px]" value="2500.0" />
        <span className="ml-[7px] w-[24px] whitespace-nowrap">进给</span>
        <Field w={56} className="ml-[3px]" value="2500.0" />
        <span className="ml-[7px] w-[24px] whitespace-nowrap">行距</span>
        <Field w={55} className="ml-[3px]" value="8.5" />
        <span className="ml-[8px] w-[24px] whitespace-nowrap">步距</span>
        <Field w={56} className="ml-[2px]" value="1.0" />
        <div className="ml-auto mr-[3px] w-[94px] h-[21px] bg-[#1f76b4] flex items-center justify-between pl-[3px] text-white text-[17px] leading-none">
          <span>Delcam</span>
          <svg viewBox="0 0 20 20" width="22" height="22" className="shrink-0">
            <circle cx="10" cy="10" r="10" fill="#b9dbe8" />
            <circle cx="10" cy="10" r="7.5" fill="#5ba3c7" />
            <path d="M10 6V15M3 9L10 6L17 9M5 13L10 7L15 13" stroke="#111" fill="none" strokeWidth="1" />
          </svg>
        </div>
      </div>
    </div>
  )
}

function TaskButton({ label, width, active = false, className = "", children }: { label: string; width: number; active?: boolean; className?: string; children: ReactNode }) {
  return (
    <div
      className={`relative h-full flex items-center pl-[12px] shrink-0 text-[12px] text-white ${active ? "bg-[#2c2e33]" : ""} ${className}`}
      style={{ width }}
    >
      {children}
      <span className="ml-[6px] whitespace-nowrap">{label}</span>
      <div className="absolute left-0 right-0 bottom-0 h-[3px] bg-[#76b9ed]" />
    </div>
  )
}

const tray = ["wifi", "film", "sheet", "eset", "pdf", "adsk", "red", "net", "sound"]

function Taskbar() {
  return (
    <div className="relative h-[40px] shrink-0 bg-[#020208] border-t border-[#e0e0e0] flex items-stretch overflow-hidden">
      <div className="w-[48px] flex items-center justify-center shrink-0">
        <svg viewBox="0 0 16 16" width="16" height="16"><path d="M0 2.3L6.8 1.3V7.6H0ZM7.6 1.2L16 0V7.6H7.6ZM0 8.4H6.8V14.7L0 13.7ZM7.6 8.4H16V16L7.6 14.8Z" fill="#fff" /></svg>
      </div>
      <div className="w-[52px] flex items-center justify-center shrink-0">
        <svg viewBox="0 0 24 24" width="24" height="24">
          <path d="M12 12L12 0A8 8 0 0 1 20 6Z" fill="#e8483b" />
          <path d="M12 12L20 6A8 8 0 0 1 21 17Z" fill="#f4b120" />
          <path d="M12 12L21 17A8 8 0 0 1 12 24Z" fill="#f26b2e" />
          <path d="M12 12L12 24A8 8 0 0 1 3 17Z" fill="#3bb54a" />
          <path d="M12 12L3 17A8 8 0 0 1 4 6Z" fill="#2d9fe0" />
          <path d="M12 12L4 6A8 8 0 0 1 12 0Z" fill="#9b46d0" />
        </svg>
      </div>
      <TaskButton label="PowerMILL Pro 2..." width={160} active>
        <svg viewBox="0 0 20 20" width="20" height="20" className="shrink-0">
          <circle cx="9" cy="10" r="8" fill="#8e8e8e" />
          <path d="M11 1H18V19H11Z" fill="#dfc83a" />
          <path d="M11 8L18 4M11 14L18 10" stroke="#222" strokeWidth="1.4" />
        </svg>
      </TaskButton>
      <TaskButton label="NX 12 - 建模" width={152} className="ml-[5px] !pl-[6px]">
        <svg viewBox="0 0 22 22" width="22" height="22" className="shrink-0">
          <circle cx="10" cy="13" r="8" fill="#2f8fdc" />
          <path d="M2 18C8 20 17 16 20 8" stroke="#e8b21c" strokeWidth="2.4" fill="none" />
          <path d="M5 1L13 2L9 11Z" fill="#e02d3a" />
        </svg>
      </TaskButton>
      <TaskButton label="机明自动编程企业..." width={152} className="ml-[9px] !pl-[6px]">
        <svg viewBox="0 0 20 20" width="22" height="22" className="shrink-0">
          <path d="M2 3L18 1V19L2 17Z" fill="#1e9d4c" />
          <path d="M6 6H15M6 10H15M6 14H15M10 6V14" stroke="#fff" />
        </svg>
      </TaskButton>

      {/* blue blob sits over the bar, it isn't part of the shell */}
      <div className="absolute left-[996px] top-[9px] w-[58px] h-[60px] rounded-full bg-[#0000ff]" />

      <div className="ml-auto flex items-center text-white text-[12px] pr-[3px]">
        {tray.map(t => (
          <div key={t} className="w-[24.4px] flex justify-center shrink-0">
            <Ic size={18}>{icons[t]}</Ic>
          </div>
        ))}
        <span className="w-[24px] text-center text-[14px]">英</span>
        <div className="ml-[9px] w-[14px] h-[14px] bg-white text-black text-[12px] font-bold flex items-center justify-center leading-none">M</div>
        <div className="ml-[21px] w-[70px] flex flex-col items-center leading-[19px]">
          <span>13:43</span>
          <span>2019-03-05</span>
        </div>
      </div>
    </div>
  )
}

export default function App() {
  return (
    <div className="w-[1920px] h-[1080px] flex flex-col overflow-hidden bg-[#f0f0f0] font-['Noto_Sans','Noto_Sans_CJK_SC',sans-serif]">
      <TitleBar />
      <MenuBar />
      <MainToolbar />
      <div className="flex-1 flex min-h-0">
        <Explorer />
        <div className="flex-1 min-w-0 bg-[linear-gradient(#2f4b63_0%,#1c2f40_35%,#0a1219_68%,#000000_92%)]">
          <Part />
        </div>
        <RightStrip />
      </div>
      <BottomBars />
      <Taskbar />
    </div>
  )
}
